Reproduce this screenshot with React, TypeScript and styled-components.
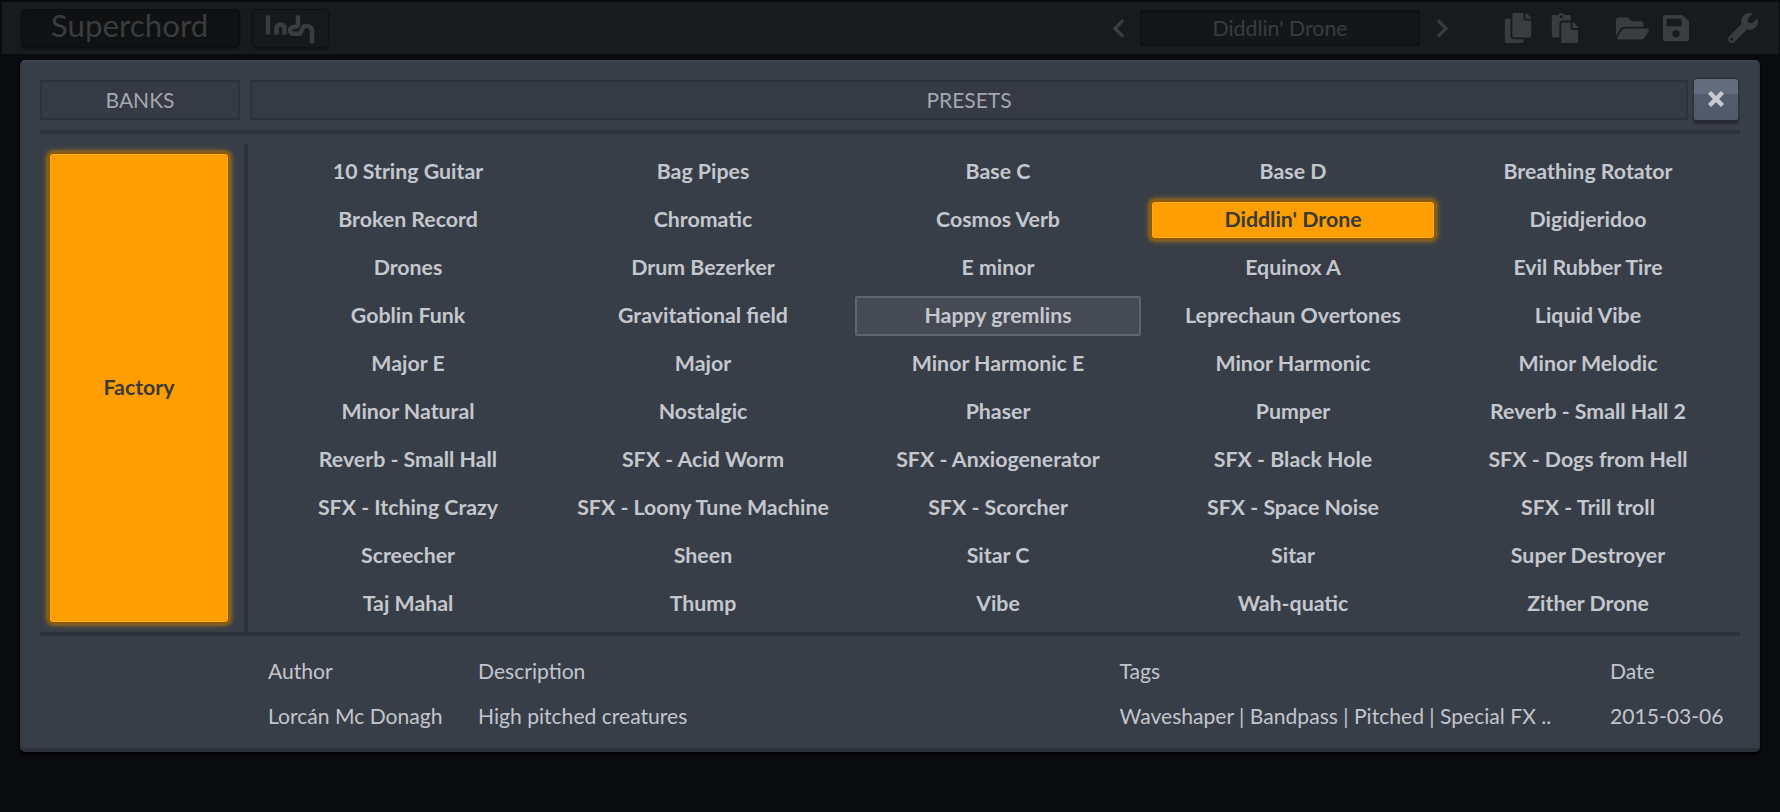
import styled, { createGlobalStyle } from 'styled-components';
import { FaChevronLeft, FaChevronRight, FaCopy, FaPaste, FaFolderOpen, FaSave, FaWrench } from 'react-icons/fa';

const PRESETS = [
  '10 String Guitar', 'Bag Pipes', 'Base C', 'Base D', 'Breathing Rotator',
  'Broken Record', 'Chromatic', 'Cosmos Verb', "Diddlin' Drone", 'Digidjeridoo',
  'Drones', 'Drum Bezerker', 'E minor', 'Equinox A', 'Evil Rubber Tire',
  'Goblin Funk', 'Gravitational field', 'Happy gremlins', 'Leprechaun Overtones', 'Liquid Vibe',
  'Major E', 'Major', 'Minor Harmonic E', 'Minor Harmonic', 'Minor Melodic',
  'Minor Natural', 'Nostalgic', 'Phaser', 'Pumper', 'Reverb - Small Hall 2',
  'Reverb - Small Hall', 'SFX - Acid Worm', 'SFX - Anxiogenerator', 'SFX - Black Hole', 'SFX - Dogs from Hell',
  'SFX - Itching Crazy', 'SFX - Loony Tune Machine', 'SFX - Scorcher', 'SFX - Space Noise', 'SFX - Trill troll',
  'Screecher', 'Sheen', 'Sitar C', 'Sitar', 'Super Destroyer',
  'Taj Mahal', 'Thump', 'Vibe', 'Wah-quatic', 'Zither Drone',
];

type PresetState = 'idle' | 'active' | 'hover' | 'fading';

const stateOf = (name: string): PresetState => {
  if (name === "Diddlin' Drone") return 'active';
  if (name === 'Happy gremlins') return 'hover';
  if (name === 'Equinox A') return 'fading';
  return 'idle';
};

const GlobalStyle = createGlobalStyle`
  html, body {
    margin: 0;
    padding: 0;
    background: #0a0b0e;
  }
  * {
    box-sizing: border-box;
  }
`;

const Page = styled.div`
  width: 1780px;
  height: 812px;
  padding-top: 2px;
  overflow: hidden;
  background: #0a0b0e;
  font-family: Lato, 'Liberation Sans', sans-serif;
`;

const TopBar = styled.div`
  display: flex;
  align-items: center;
  width: 1777px;
  height: 52px;
  margin-left: 2px;
  padding: 0 21px 0 19px;
  background: #181b1e;
  color: #3a3c3e;
`;

const PluginName = styled.div`
  display: flex;
  align-items: center;
  justify-content: center;
  width: 219px;
  height: 39px;
  padding: 0 2px 7px 0;
  background: #0f1113;
  border: 1px solid #0b0d0e;
  border-radius: 5px;
  box-shadow: 0 1px 2px #101214;
  font-size: 31.3px;
`;

const LogoButton = styled.div`
  width: 77px;
  height: 39px;
  margin-left: 12px;
  background: #16181b;
  border: 1px solid #0e1012;
  border-radius: 5px;
  box-shadow: 0 1px 2px #101214;
`;

const Arrow = styled.div<{ $first?: boolean }>`
  display: flex;
  ${(props) => (props.$first ? 'margin-left: auto;' : '')}
`;

const PresetName = styled.div`
  display: flex;
  align-items: center;
  justify-content: center;
  width: 280px;
  height: 36px;
  margin: 0 11.5px;
  padding-bottom: 1px;
  background: #14171a;
  border: 2px solid #101214;
  border-top-width: 3px;
  font-size: 21.33px;
`;

const ToolIcon = styled.div<{ $gap: number }>`
  display: flex;
  margin-left: ${(props) => props.$gap}px;
`;

const Modal = styled.div`
  width: 1740px;
  height: 692px;
  margin: 6px 0 0 20px;
  padding: 18px 18px 0;
  background: #383e48;
  border: 2px solid #343942;
  border-top-color: #40464f;
  border-bottom: 4px solid #2d3138;
  border-radius: 5px;
  box-shadow: 0 2px 3px #000;
`;

const HeaderRow = styled.div`
  display: flex;
  align-items: center;
  height: 40px;
`;

const HeaderCell = styled.div<{ $width: number }>`
  display: flex;
  align-items: center;
  justify-content: center;
  width: ${(props) => props.$width}px;
  height: 40px;
  margin-right: 10px;
  padding-bottom: 2px;
  background: #353a44;
  border: 2px solid #2d3138;
  color: #a3a7af;
  font-size: 21px;
`;

const CloseButton = styled.button`
  display: flex;
  align-items: center;
  justify-content: center;
  width: 46px;
  height: 45px;
  margin-left: -5px;
  padding: 0;
  background: linear-gradient(#636d7d 0, #636d7d 36%, #545d6d 36%, #505969 100%);
  border: 1px solid #2c3037;
  border-bottom: 3px solid #262a30;
  border-radius: 4px;
  box-shadow: 0 1px 2px #2a2e35;
`;

const Rule = styled.div<{ $flush?: boolean }>`
  height: 4px;
  margin-top: ${(props) => (props.$flush ? 0 : 10)}px;
  background: #2d3138;
`;

const ContentRow = styled.div`
  display: grid;
  grid-template-columns: 204px 4px 1fr;
  height: 498px;
`;

const BankColumn = styled.div`
  padding: 18px 0 0 8px;
`;

const BankButton = styled.div`
  display: flex;
  align-items: center;
  justify-content: center;
  width: 182px;
  height: 472px;
  padding-bottom: 2px;
  background: #ff9e00;
  border: 2px solid #8a5a05;
  border-radius: 5px;
  box-shadow: 0 0 5px 1px #b87a0a, inset 0 0 0 1px #ffa91f;
  color: #3a3a38;
  font-size: 21.33px;
  font-weight: 700;
`;

const Divider = styled.div`
  margin-top: 10px;
  background: #2d3138;
`;

const PresetGrid = styled.div`
  display: grid;
  grid-template-columns: repeat(5, 286px);
  grid-auto-rows: 40px;
  gap: 8px 9px;
  padding: 18px 0 0 17px;
`;

const presetStyles: Record<PresetState, string> = {
  idle: 'color: #c4c7cd;',
  active: `
    color: #3a3a38;
    background: #ff9e00;
    border: 2px solid #8a5a05;
    border-radius: 5px;
    box-shadow: 0 0 5px 1px #b87a0a, inset 0 0 0 1px #ffa91f;
  `,
  hover: `
    color: #c4c7cd;
    background: #464a54;
    border: 2px solid #5f6470;
    border-radius: 2px;
  `,
  fading: 'color: #c4c7cd; background: #373c46;',
};

const PresetItem = styled.div<{ $state: PresetState }>`
  display: flex;
  align-items: center;
  justify-content: center;
  padding-bottom: 2px;
  font-size: 21.33px;
  font-weight: 700;
  ${(props) => presetStyles[props.$state]}
`;

const InfoGrid = styled.div`
  display: grid;
  grid-template-columns: 210px 641.5px 490.5px auto;
  grid-auto-rows: 45px;
  padding: 12px 0 0 228px;
  color: #c2c5cb;
  font-size: 21.1px;
`;

const InfoCell = styled.div`
  display: flex;
  align-items: center;
  white-space: nowrap;
`;

const IndpLogo = () => (
  <svg width="75" height="37" viewBox="0 0 75 37" fill="none" stroke="#3a3c3e" strokeWidth="4.6">
    <path d="M15 5.5V24.5" />
    <path d="M23.5 24.5V18.5a4 4 0 0 1 8 0V24.5" />
    <path d="M45 5.5V13C45 16.5 43 17 40.5 17A3.4 3.4 0 0 0 40.5 23.8H46C49 23.8 49 16 52 16H54A5 5 0 0 1 59 21V33.5" />
  </svg>
);

const App = () => (
  <Page>
    <GlobalStyle />
    <TopBar>
      <PluginName>Superchord</PluginName>
      <LogoButton>
        <IndpLogo />
      </LogoButton>
      <Arrow $first>
        <FaChevronLeft size={21} />
      </Arrow>
      <PresetName>Diddlin' Drone</PresetName>
      <Arrow>
        <FaChevronRight size={21} />
      </Arrow>
      <ToolIcon $gap={50.5}>
        <FaCopy size={30} />
      </ToolIcon>
      <ToolIcon $gap={17}>
        <FaPaste size={30} />
      </ToolIcon>
      <ToolIcon $gap={36}>
        <FaFolderOpen size={33} />
      </ToolIcon>
      <ToolIcon $gap={12}>
        <FaSave size={30} />
      </ToolIcon>
      <ToolIcon $gap={37}>
        <FaWrench size={30} />
      </ToolIcon>
    </TopBar>
    <Modal>
      <HeaderRow>
        <HeaderCell $width={200}>BANKS</HeaderCell>
        <HeaderCell $width={1438}>PRESETS</HeaderCell>
        <CloseButton aria-label="Close">
          <svg width="18" height="18" viewBox="0 0 18 18" stroke="#c9cbce" strokeWidth="4.4">
            <path d="M2.5 2.5L15.5 15.5M15.5 2.5L2.5 15.5" />
          </svg>
        </CloseButton>
      </HeaderRow>
      <Rule />
      <ContentRow>
        <BankColumn>
          <BankButton>Factory</BankButton>
        </BankColumn>
        <Divider />
        <PresetGrid>
          {PRESETS.map((name) => (
            <PresetItem key={name} $state={stateOf(name)}>
              {name}
            </PresetItem>
          ))}
        </PresetGrid>
      </ContentRow>
      <Rule $flush />
      <InfoGrid>
        <InfoCell>Author</InfoCell>
        <InfoCell>Description</InfoCell>
        <InfoCell>Tags</InfoCell>
        <InfoCell>Date</InfoCell>
        <InfoCell>Lorcán Mc Donagh</InfoCell>
        <InfoCell>High pitched creatures</InfoCell>
        <InfoCell>Waveshaper | Bandpass | Pitched | Special FX ..</InfoCell>
        <InfoCell>2015-03-06</InfoCell>
      </InfoGrid>
    </Modal>
  </Page>
);

export default App;
